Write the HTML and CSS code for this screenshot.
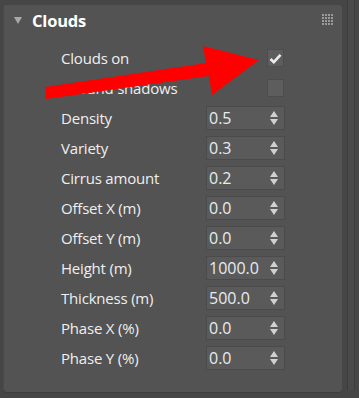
FILE: index.html
```html
<!DOCTYPE html>
<html>
<head>
<meta charset="utf-8">
<link rel="stylesheet" href="styles.css">
</head>
<body>
<div class="frame">
  <div class="panel">
    <div class="header">
      <span class="tri"></span>
      <span class="title">Clouds</span>
      <span class="grip">
        <i></i><i></i><i></i><i></i><i></i><i></i><i></i><i></i>
        <i></i><i></i><i></i><i></i><i></i><i></i><i></i><i></i>
      </span>
    </div>
    <div class="rows">
      <div class="row"><span class="label">Clouds on</span><span class="check on"><svg width="13" height="11" viewBox="0 0 13 11"><path d="M1.5 6 L4.8 9.2 L11.5 1.8" fill="none" stroke="#ececec" stroke-width="2.6"/></svg></span></div>
      <div class="row"><span class="label">Ground shadows</span><span class="check"></span></div>
      <div class="row"><span class="label">Density</span><span class="spin"><span class="val">0.5</span><span class="arr"></span></span></div>
      <div class="row"><span class="label">Variety</span><span class="spin"><span class="val">0.3</span><span class="arr"></span></span></div>
      <div class="row"><span class="label">Cirrus amount</span><span class="spin"><span class="val">0.2</span><span class="arr"></span></span></div>
      <div class="row"><span class="label">Offset X (m)</span><span class="spin"><span class="val">0.0</span><span class="arr"></span></span></div>
      <div class="row"><span class="label">Offset Y (m)</span><span class="spin"><span class="val">0.0</span><span class="arr"></span></span></div>
      <div class="row"><span class="label">Height (m)</span><span class="spin"><span class="val">1000.0</span><span class="arr"></span></span></div>
      <div class="row"><span class="label">Thickness (m)</span><span class="spin"><span class="val">500.0</span><span class="arr"></span></span></div>
      <div class="row"><span class="label">Phase X (%)</span><span class="spin"><span class="val">0.0</span><span class="arr"></span></span></div>
      <div class="row"><span class="label">Phase Y (%)</span><span class="spin"><span class="val">0.0</span><span class="arr"></span></span></div>
    </div>
  </div>
  <div class="scroll"></div>
</div>
<svg class="arrow" width="359" height="398" viewBox="0 0 359 398">
  <polygon points="45,87 206,63 203,46 259,60 212,95 209,76 46,99" fill="#ff0000"/>
</svg>
</body>
</html>
```
FILE: styles.css
```css
html, body {
  margin: 0;
  padding: 0;
  background: #464646;
  width: 359px;
  height: 398px;
  overflow: hidden;
  font-family: "Open Sans", "Noto Sans", sans-serif;
}
.frame {
  display: flex;
  padding: 5px 0 0 4px;
  gap: 5px;
  height: 398px;
  box-sizing: border-box;
}
.panel {
  width: 338px;
  height: 387px;
  background: #535353;
  border-radius: 3px;
  box-shadow: 0 1px 0 #3e3e3e, -1px 0 0 #4a4a4a;
  display: flex;
  flex-direction: column;
}
.header {
  height: 30px;
  display: flex;
  align-items: center;
  padding-left: 10px;
  padding-right: 9px;
}
.tri {
  width: 0;
  height: 0;
  border-left: 4.5px solid transparent;
  border-right: 4.5px solid transparent;
  border-top: 7px solid #a8a8a8;
}
.title {
  margin-left: 10px;
  color: #ffffff;
  font-weight: bold;
  font-size: 16.5px;
  letter-spacing: -0.2px;
  flex: 1;
}
.grip {
  display: grid;
  grid-template-columns: repeat(4, 2px);
  grid-auto-rows: 2px;
  gap: 1px;
  margin-top: -2px;
}
.grip i {
  display: block;
  width: 2px;
  height: 2px;
  background: #9a9a9a;
}
.rows {
  padding-top: 8px;
  padding-left: 57px;
  display: flex;
  flex-direction: column;
}
.row {
  height: 30px;
  display: grid;
  grid-template-columns: 145px 79px;
  align-items: center;
}
.label {
  color: #efefef;
  font-size: 15px;
  letter-spacing: -0.2px;
}
.check {
  justify-self: end;
  margin-right: 1px;
  width: 17px;
  height: 18px;
  box-sizing: border-box;
  background: #5d5d5d;
  border: 1px solid #4d4d4d;
  display: flex;
  align-items: center;
  justify-content: center;
}
.spin {
  height: 24px;
  box-sizing: border-box;
  background: #5a5a5a;
  border: 1px solid #4b4b4b;
  display: flex;
  align-items: center;
  padding-left: 2px;
  padding-right: 6px;
}
.val {
  flex: 1;
  color: #e6ebef;
  font-size: 16px;
}
.arr {
  position: relative;
  width: 8px;
  height: 16px;
}
.arr::before, .arr::after {
  content: "";
  position: absolute;
  left: 0;
  border-left: 4px solid transparent;
  border-right: 4px solid transparent;
}
.arr::before {
  top: 1px;
  border-bottom: 6px solid #d0d0d0;
}
.arr::after {
  bottom: 1px;
  border-top: 6px solid #d0d0d0;
}
.scroll {
  width: 6px;
  height: 390px;
  margin-top: -5px;
  background: #4a4a4a;
  border-left: 1px solid #3c3c3c;
  border-right: 1px solid #3c3c3c;
}
.arrow {
  position: absolute;
  left: 0;
  top: 0;
  pointer-events: none;
}
```
